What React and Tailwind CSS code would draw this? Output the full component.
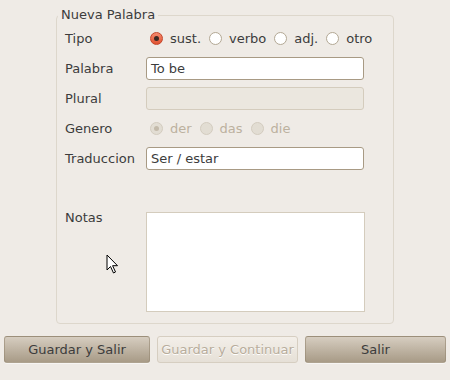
const font = { fontFamily: '"DejaVu Sans", "Liberation Sans", sans-serif' };

function Radio({ label, checked, disabled }) {
  let circle = "border-[#b3a894] bg-white";
  if (checked && !disabled) circle = "border-[#c4452a] bg-gradient-to-b from-[#f58a6e] to-[#e0512f]";
  if (disabled) circle = "border-[#d3ccbf] bg-[#e2ddd3]";
  return (
    <div className="flex items-center gap-[7px]">
      <span className={`w-[13px] h-[13px] rounded-full border flex items-center justify-center ${circle}`}>
        {checked && (
          <span className={`w-[5px] h-[5px] rounded-full ${disabled ? "bg-[#c3baaa]" : "bg-[#3a2a24]"}`} />
        )}
      </span>
      <span className={disabled ? "text-[#bcb19f]" : "text-[#3c3c3c]"}>{label}</span>
    </div>
  );
}

function Row({ label, children }) {
  return (
    <div className="flex items-center h-[23px]">
      <span className="w-[81px] shrink-0">{label}</span>
      {children}
    </div>
  );
}

function Input({ value, disabled }) {
  return (
    <div
      className={`w-[218px] h-[23px] rounded-[3px] border flex items-center px-[4px] ${
        disabled ? "bg-[#ebe7df] border-[#d4ccbd]" : "bg-white border-[#a89a84]"
      }`}
    >
      {value}
    </div>
  );
}

function Button({ label, disabled, w }) {
  return (
    <button
      className={`${w} h-[27px] rounded-[3px] border flex items-center justify-center ${
        disabled
          ? "border-[#d6cec1] bg-gradient-to-b from-[#f3efe9] to-[#e6e0d7] text-[#b8ad9c] [text-shadow:0_1px_0_#ffffff]"
          : "border-[#94877299] bg-gradient-to-b from-[#d6cdc0] to-[#a89b87] text-[#3c3c3c] shadow-[0_1px_0_rgba(255,255,255,0.5)]"
      }`}
    >
      {label}
    </button>
  );
}

export default function App() {
  return (
    <div
      className="w-[450px] h-[380px] bg-[#efebe6] text-[13px] leading-[15px] text-[#3c3c3c] relative overflow-hidden"
      style={font}
    >
      <div className="pt-[15px]">
        <div className="ml-[56px] w-[338px] border border-[#ddd7cc] rounded-[4px] relative pl-[8px] pt-[11px] pb-[11px] flex flex-col gap-[7px]">
          {/* frame title over the border */}
          <span className="absolute left-[1px] top-[-9px] px-[3px] bg-[#efebe6]">Nueva Palabra</span>

          <Row label="Tipo">
            <div className="flex items-center gap-[8px] pl-[4px]">
              <Radio label="sust." checked />
              <Radio label="verbo" />
              <Radio label="adj." />
              <Radio label="otro" />
            </div>
          </Row>
          <Row label="Palabra">
            <Input value="To be" />
          </Row>
          <Row label="Plural">
            <Input disabled />
          </Row>
          <Row label="Genero">
            <div className="flex items-center gap-[8px] pl-[4px]">
              <Radio label="der" checked disabled />
              <Radio label="das" disabled />
              <Radio label="die" disabled />
            </div>
          </Row>
          <Row label="Traduccion">
            <Input value="Ser / estar" />
          </Row>

          <div className="flex items-start mt-[35px]">
            <span className="w-[81px] shrink-0 -mt-[2px]">Notas</span>
            <div className="w-[219px] h-[100px] bg-white border border-[#d4ccbd]" />
          </div>
        </div>
      </div>

      <div className="flex mt-[12px] pl-[4px]">
        <Button label="Guardar y Salir" w="w-[146px]" />
        <div className="ml-[7px]">
          <Button label="Guardar y Continuar" disabled w="w-[141px]" />
        </div>
        <div className="ml-[7px]">
          <Button label="Salir" w="w-[141px]" />
        </div>
      </div>

      {/* mouse pointer */}
      <svg className="absolute left-[106px] top-[254px]" width="13" height="21" viewBox="0 0 13 21">
        <path d="M1 1 L1 16 L4.5 12.5 L7.5 19 L9.5 18 L6.6 11.7 L11.5 11.7 Z" fill="#ffffff" stroke="#000000" strokeWidth="1" strokeLinejoin="round" />
      </svg>
    </div>
  );
}
